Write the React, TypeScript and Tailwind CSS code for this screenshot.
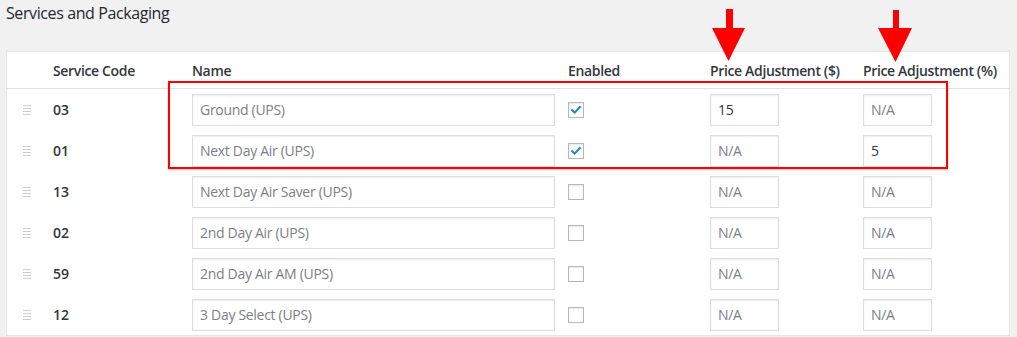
const rows = [
  { code: "03", name: "Ground (UPS)", enabled: true, flat: "15", pct: "" },
  { code: "01", name: "Next Day Air (UPS)", enabled: true, flat: "", pct: "5" },
  { code: "13", name: "Next Day Air Saver (UPS)", enabled: false, flat: "", pct: "" },
  { code: "02", name: "2nd Day Air (UPS)", enabled: false, flat: "", pct: "" },
  { code: "59", name: "2nd Day Air AM (UPS)", enabled: false, flat: "", pct: "" },
  { code: "12", name: "3 Day Select (UPS)", enabled: false, flat: "", pct: "" },
];

const cols = "grid grid-cols-[46px_139px_376px_142px_153px_1fr]";

const inputCls =
  "h-[32px] border border-[#dddddd] bg-white px-[7px] text-[14px] tracking-[-0.3px] text-[#32373c] shadow-[inset_0_1px_2px_rgba(0,0,0,0.07)] outline-none placeholder:text-[#7c8085]";

function DragHandle() {
  return (
    <div className="flex w-[8px] flex-col gap-[2px]">
      <span className="h-[1px] bg-[#cfcfcf]" />
      <span className="h-[1px] bg-[#cfcfcf]" />
      <span className="h-[1px] bg-[#cfcfcf]" />
      <span className="h-[1px] bg-[#cfcfcf]" />
    </div>
  );
}

function Checkbox({ checked }: { checked: boolean }) {
  return (
    <span className="flex size-[16px] items-center justify-center border border-[#b4b9be] bg-white shadow-[inset_0_1px_2px_rgba(0,0,0,0.1)]">
      {checked && (
        <svg viewBox="0 0 16 16" className="size-[14px]">
          <path
            d="M3.5 8.2 L6.5 11 L12.5 4.5"
            fill="none"
            stroke="#1e8cbe"
            strokeWidth="2.4"
            strokeLinecap="square"
          />
        </svg>
      )}
    </span>
  );
}

export default function App() {
  return (
    <div
      className="relative h-[337px] w-[1017px] overflow-hidden bg-[#f1f1f1]"
      style={{ fontFamily: '"Open Sans", "Noto Sans", sans-serif' }}
    >
      <h2 className="pl-[6px] pt-[1px] text-[16px] leading-[24px] tracking-[-0.4px] text-[#23282d]">
        Services and Packaging
      </h2>

      <div className="ml-[6px] mt-[26px] w-[1004px] border border-[#e5e5e5] bg-white">
        <div
          className={`${cols} h-[37px] items-center border-b border-[#e1e1e1] text-[14px] font-semibold tracking-[-0.35px] text-[#32373c]`}
        >
          <div />
          <div>Service Code</div>
          <div>Name</div>
          <div>Enabled</div>
          <div>Price Adjustment ($)</div>
          <div>Price Adjustment (%)</div>
        </div>

        {rows.map((row) => (
          <div key={row.code} className={`${cols} h-[41px] items-center`}>
            <div className="pl-[16px]">
              <DragHandle />
            </div>
            <div className="text-[14px] font-semibold text-[#32373c]">{row.code}</div>
            <div>
              <input className={`${inputCls} w-[363px]`} placeholder={row.name} readOnly />
            </div>
            <div>
              <Checkbox checked={row.enabled} />
            </div>
            <div>
              <input
                className={`${inputCls} w-[69px]`}
                placeholder="N/A"
                defaultValue={row.flat}
                readOnly
              />
            </div>
            <div>
              <input
                className={`${inputCls} w-[69px]`}
                placeholder="N/A"
                defaultValue={row.pct}
                readOnly
              />
            </div>
          </div>
        ))}
      </div>

      {/* annotation overlay */}
      <div className="pointer-events-none absolute left-[168px] top-[81px] h-[88px] w-[780px] border-2 border-[#ff0000] shadow-[0_1px_2px_rgba(0,0,0,0.25)]" />
      <svg className="pointer-events-none absolute left-0 top-0" width="1017" height="80">
        <polygon points="726,9 733,9 733,28 745,28 728.5,61 712,28 726,28" fill="#ff0000" />
        <polygon points="893,10 899,10 899,28 912,28 895.5,62 878,28 893,28" fill="#ff0000" />
      </svg>
    </div>
  );
}
